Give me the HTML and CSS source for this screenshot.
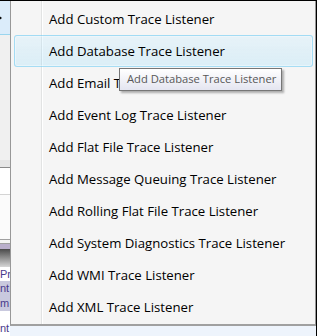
FILE: index.html
```html
<!DOCTYPE html>
<html>
<head>
<meta charset="utf-8">
<link rel="stylesheet" href="styles.css">
</head>
<body>
<div class="screen">
  <div class="app">
    <div class="side">
      <div class="sel-row"><span class="arrow"></span></div>
      <div class="gray-a"></div>
      <div class="band1"></div>
      <div class="white-a"></div>
      <div class="line-a"></div>
      <div class="white-b"></div>
      <div class="lines-b"></div>
      <div class="purple"></div>
      <div class="grad"></div>
      <div class="txt-row white">Pr</div>
      <div class="txt-row lav">nt</div>
      <div class="txt-row lav">m</div>
      <div class="txt-row white tall">nt</div>
    </div>
    <div class="main">
      <div class="main-fill"></div>
      <div class="status"></div>
    </div>
  </div>

  <div class="menu">
    <div class="item">Add Custom Trace Listener</div>
    <div class="item hover">Add Database Trace Listener</div>
    <div class="item">Add Email Trace Listener</div>
    <div class="item">Add Event Log Trace Listener</div>
    <div class="item">Add Flat File Trace Listener</div>
    <div class="item">Add Message Queuing Trace Listener</div>
    <div class="item">Add Rolling Flat File Trace Listener</div>
    <div class="item">Add System Diagnostics Trace Listener</div>
    <div class="item">Add WMI Trace Listener</div>
    <div class="item">Add XML Trace Listener</div>
  </div>

  <div class="tooltip">Add Database Trace Listener</div>
</div>
</body>
</html>
```

FILE: styles.css
```css
html, body {
  margin: 0;
  padding: 0;
  background: #fff;
}
.screen {
  position: relative;
  width: 317px;
  height: 336px;
  box-sizing: border-box;
  border-top: 1px solid #000;
  border-right: 1px solid #000;
  overflow: hidden;
  font-family: "Open Sans", "Noto Sans", sans-serif;
}
.app {
  display: flex;
  height: 335px;
}
.side {
  width: 10px;
  display: flex;
  flex-direction: column;
  overflow: hidden;
  font-family: "Liberation Sans", sans-serif;
  font-size: 11px;
  color: #4a3b8c;
}
.sel-row {
  height: 33px;
  background: #dbecfa;
  border-bottom: 1px solid #9ad5ee;
  position: relative;
}
.arrow {
  position: absolute;
  left: -2px;
  top: 14px;
  border-left: 4px solid #000;
  border-top: 3px solid transparent;
  border-bottom: 3px solid transparent;
}
.gray-a { height: 125px; background: #f0f0f0; }
.band1 { height: 7px; background: #e6e6e6; border-bottom: 1px solid #8a8a8a; }
.white-a { height: 26px; background: #fff; }
.line-a { height: 1px; background: #d4d4d4; }
.white-b { height: 44px; background: #fbfbfb; }
.lines-b { height: 5px; border-top: 1px solid #a0a0a0; border-bottom: 1px solid #a0a0a0; box-sizing: border-box; background: #f4f4f4; }
.purple { height: 5px; background: #b9aecb; }
.grad { height: 18px; background: linear-gradient(#4a4a4a, #d6d6d6); }
.txt-row {
  height: 14px;
  line-height: 14px;
  white-space: nowrap;
}
.txt-row.white { background: #fff; }
.txt-row.lav { background: #c9c9de; height: 15px; }
.txt-row.tall { height: 24px; line-height: 34px; }
.main {
  flex: 1;
  display: flex;
  flex-direction: column;
}
.main-fill { flex: 1; background: #f0f0f0; }
.status { height: 10px; background: #eef4fc; }

.menu {
  position: absolute;
  left: 10px;
  top: 0;
  width: 306px;
  height: 325px;
  box-sizing: border-box;
  border: 1px solid #979797;
  border-top: none;
  border-bottom: 2px solid #a0a0a0;
  padding-top: 2px;
  background: linear-gradient(to right, #f5f5f5 0, #f5f5f5 30px, #e2e3e3 30px, #e2e3e3 31px, #fff 31px, #fff 32px, #f5f5f5 32px);
}
.item {
  height: 32px;
  box-sizing: border-box;
  margin: 0 2px 0 3px;
  padding-left: 34px;
  border: 1px solid transparent;
  border-radius: 3px;
  line-height: 30px;
  font-size: 13.2px;
  color: #000;
  white-space: nowrap;
}
.item.hover {
  border-color: rgba(113, 203, 241, 0.55);
  background: linear-gradient(rgba(197, 235, 255, 0.3), rgba(129, 216, 255, 0.22));
  box-shadow: inset 0 0 0 1px rgba(255, 255, 255, 0.35);
}
.tooltip {
  position: absolute;
  left: 119px;
  top: 67px;
  width: 163px;
  height: 23px;
  box-sizing: border-box;
  border: 1px solid #767676;
  background: linear-gradient(#ffffff, #e4e5f0);
  box-shadow: 2px 2px 2px rgba(0, 0, 0, 0.3);
  color: #575757;
  font-size: 11.2px;
  line-height: 20px;
  padding-left: 7px;
  white-space: nowrap;
}
```
